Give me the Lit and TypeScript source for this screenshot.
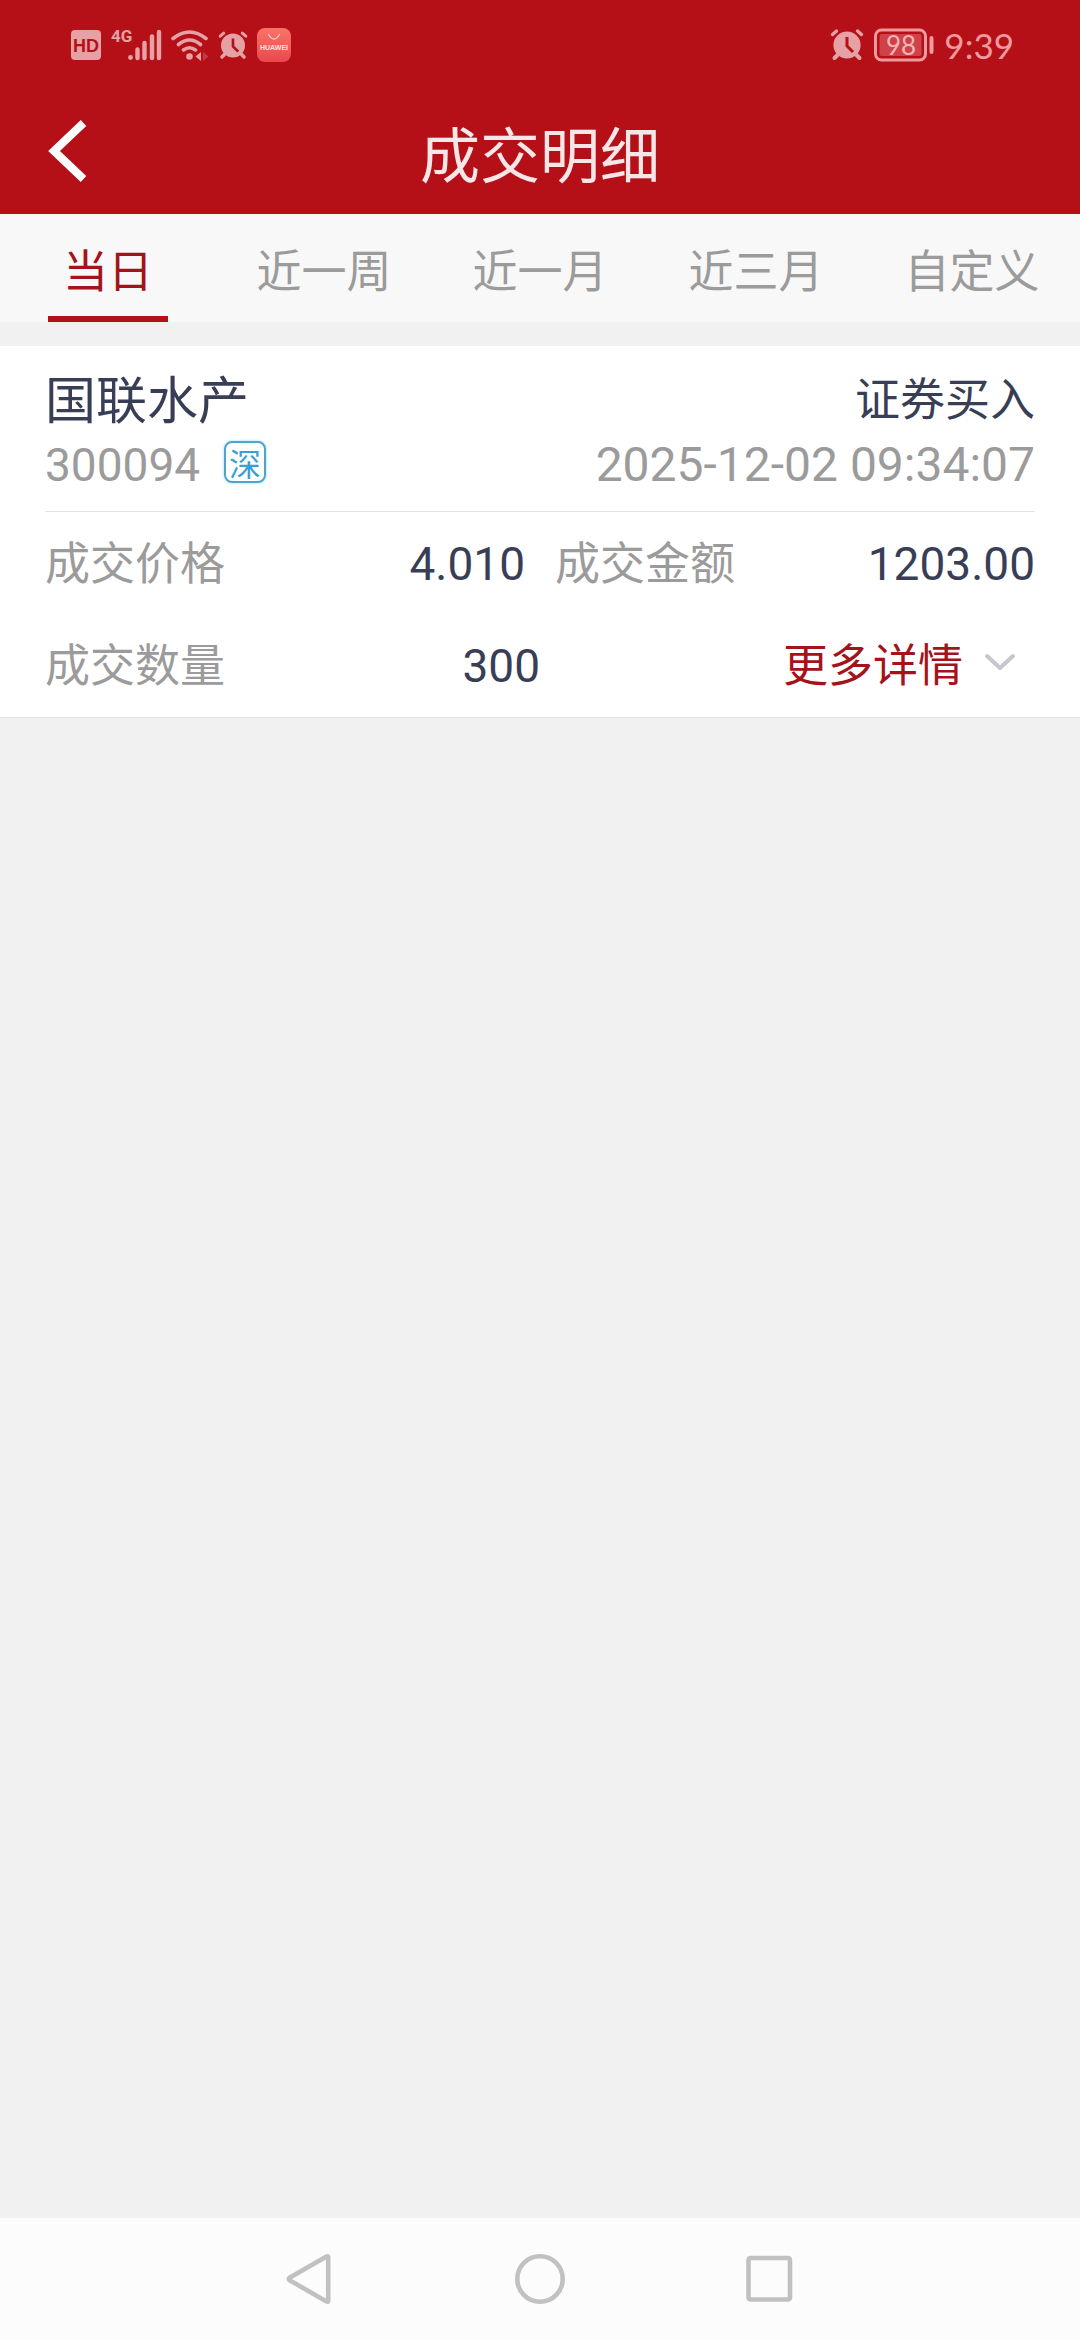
import { LitElement, html, css, svg } from "lit";
import { customElement, property, state } from "lit/decorators.js";

const alarm = svg`
  <circle cx="17" cy="17" r="13.6" fill="currentColor" />
  <path d="M7.5 27 4.5 30M26.5 27l3 3" stroke="currentColor" stroke-width="4" stroke-linecap="round" />
  <path d="M2.5 6.5 6.5 3M31.5 6.5 27.5 3" stroke="currentColor" stroke-width="3.4" stroke-linecap="round" />
  <path d="M17 9v9l6 6" fill="none" stroke="#b51017" stroke-width="3" />
`;

@customElement("status-bar")
export class StatusBar extends LitElement {
  static styles = css`
    :host {
      display: flex;
      justify-content: space-between;
      align-items: center;
      height: 90px;
      box-sizing: border-box;
      padding: 0 66px 0 71px;
      color: #e6a1a5;
    }
    .group {
      display: flex;
      align-items: center;
    }
    .left {
      gap: 9px;
    }
    .right {
      gap: 9px;
    }
    svg {
      display: block;
    }
    .badge {
      font-family: "Liberation Sans", sans-serif;
      font-weight: 700;
    }
    .network {
      font-family: "Liberation Sans Narrow", Roboto, sans-serif;
      font-weight: 700;
    }
    .charge {
      font-family: Lato, sans-serif;
    }
    .time {
      font-family: Lato, sans-serif;
      font-size: 35px;
      line-height: 48px;
      color: #ef9a9e;
    }
  `;

  render() {
    return html`
      <div class="group left">
        <svg width="30" height="30" viewBox="0 0 30 30" role="img" aria-label="HD">
          <rect width="30" height="30" rx="4" fill="currentColor" />
          <text class="badge" x="15" y="21.5" font-size="18" text-anchor="middle" fill="#b51017">HD</text>
        </svg>
        <svg width="52" height="46" viewBox="0 -6 52 46" role="img" aria-label="4G">
          <text class="network" x="1" y="14" font-size="17" fill="currentColor">4G</text>
          <circle cx="20.5" cy="29.500" r="2.400" fill="currentColor" />
          <path
            d="M27.500 21.500v8.500M34.500 15v15M42 8.500V30M49 4V30"
            stroke="currentColor"
            stroke-width="4.400"
            stroke-linecap="round"
          />
        </svg>
        <svg width="38" height="34" viewBox="0 0 38 34" role="img" aria-label="Wi-Fi">
          <path
            d="M2 10.500Q18.500-2.500 35 10.500M7.500 16.500Q18.500 7.500 29.500 16.500M12.500 22Q18.500 17.500 24.500 22"
            fill="none"
            stroke="currentColor"
            stroke-width="3.600"
            stroke-linecap="round"
          />
          <circle cx="18.500" cy="28.500" r="3.300" fill="currentColor" />
          <path d="M30 24v9l-5.500-4.500z" fill="currentColor" />
          <path d="M32 24v9l5.500-4.500z" fill="currentColor" opacity=".3" />
        </svg>
        <svg width="30" height="31" viewBox="0 0 34 34" role="img" aria-label="Alarm">${alarm}</svg>
        <svg width="34" height="34" viewBox="0 0 34 34" role="img" aria-label="HUAWEI">
          <defs>
            <linearGradient id="store" x2="0" y2="1">
              <stop stop-color="#fa7468" />
              <stop offset="1" stop-color="#ea484d" />
            </linearGradient>
          </defs>
          <rect width="34" height="34" rx="8" fill="url(#store)" />
          <path d="M11.500 6.500q5.500 9 11 0" fill="none" stroke="#fdd0cc" stroke-width="1.300" stroke-linecap="round" />
          <text class="badge" x="17" y="22" font-size="7" text-anchor="middle" fill="#ffe4e0">HUAWEI</text>
        </svg>
      </div>
      <div class="group right">
        <svg width="34" height="34" viewBox="0 0 34 34" role="img" aria-label="Alarm">${alarm}</svg>
        <svg width="62" height="34" viewBox="0 0 62 34" role="img" aria-label="98">
          <rect x="2.500" y="2" width="50" height="30" rx="6" fill="none" stroke="#ef9a9e" stroke-width="3" />
          <rect x="6.500" y="6" width="42" height="22" rx="2" fill="#ce4248" />
          <text class="charge" x="28" y="26.5" font-size="26" text-anchor="middle" fill="#f7b4b7">98</text>
          <path d="M58.500 10v14" stroke="#ef9a9e" stroke-width="4" stroke-linecap="round" />
        </svg>
        <span class="time">9:39</span>
      </div>
    `;
  }
}

@customElement("title-bar")
export class TitleBar extends LitElement {
  @property() heading = "";

  static styles = css`
    :host {
      display: grid;
      grid-template-columns: 1fr auto 1fr;
      align-items: center;
      height: 124px;
    }
    .back {
      justify-self: start;
      display: flex;
      margin: 0;
      padding: 12px 45px;
      border: 0;
      background: none;
      cursor: pointer;
    }
    .heading {
      margin: 0;
      font-size: 60px;
      line-height: 80px;
      font-weight: 400;
      color: #f7e6e8;
    }
  `;

  render() {
    return html`
      <button class="back" aria-label="返回">
        <svg width="42" height="64" viewBox="0 0 42 64">
          <path d="M38.500 3 9 31l29.500 28" fill="none" stroke="#fff" stroke-width="8" />
        </svg>
      </button>
      <h1 class="heading">${this.heading}</h1>
    `;
  }
}

@customElement("range-tabs")
export class RangeTabs extends LitElement {
  @property({ attribute: false }) tabs: string[] = [];
  @state() private current = 0;

  static styles = css`
    :host {
      display: block;
      background: #f8f8f8;
    }
    .tabs {
      display: grid;
      grid-template-columns: repeat(5, 1fr);
    }
    .tab {
      display: grid;
      grid-template-rows: 94px 6px;
      justify-items: center;
      align-items: center;
      padding: 8px 0 0;
      border: 0;
      background: none;
      font: inherit;
      font-size: 45px;
      line-height: 60px;
      color: #9b9b9b;
      cursor: pointer;
    }
    .tab::after {
      content: "";
      width: 120px;
      height: 6px;
    }
    .tab[aria-selected="true"] {
      color: #a5131a;
    }
    .tab[aria-selected="true"]::after {
      background: #b51017;
    }
  `;

  render() {
    return html`
      <div class="tabs" role="tablist">
        ${this.tabs.map(
          (label, i) => html`
            <button
              class="tab"
              role="tab"
              aria-selected=${i === this.current ? "true" : "false"}
              @click=${() => (this.current = i)}
            >
              <span>${label}</span>
            </button>
          `,
        )}
      </div>
    `;
  }
}

interface Trade {
  name: string;
  code: string;
  market: string;
  side: string;
  time: string;
  price: string;
  amount: string;
  quantity: string;
}

@customElement("trade-card")
export class TradeCard extends LitElement {
  @property({ attribute: false }) trade!: Trade;

  static styles = css`
    :host {
      display: block;
      padding: 18px 45px 1px;
      background: #fff;
      border-bottom: 1px solid #e2e2e2;
      color: #383e55;
      font-size: 45px;
      line-height: 64px;
    }
    .head {
      padding-bottom: 17px;
      border-bottom: 1px solid #e2e2e2;
    }
    .line {
      display: flex;
      justify-content: space-between;
      align-items: center;
      height: 65px;
    }
    .name {
      margin: 0;
      font-size: 51px;
      font-weight: 400;
    }
    .meta {
      display: flex;
      align-items: center;
      gap: 24px;
      color: #9b9b9b;
    }
    .digits {
      padding-top: 6px;
      font-family: Roboto, sans-serif;
      font-size: 46px;
      line-height: 58px;
    }
    .stamp {
      font-size: 48px;
    }
    .market {
      display: grid;
      place-items: center;
      box-sizing: border-box;
      width: 42px;
      height: 42px;
      border: 2px solid #4fa3cc;
      border-radius: 8px;
      box-shadow: 0 0 3px #8fdcff;
      font-size: 32px;
      line-height: 36px;
      color: #3a9fd4;
    }
    .row {
      display: grid;
      grid-template-columns: 1fr 1fr;
      box-sizing: border-box;
      height: 102px;
      padding-bottom: 4px;
      align-items: center;
      margin: 0;
    }
    .wide {
      column-gap: 30px;
    }
    .field {
      display: flex;
      justify-content: space-between;
      align-items: center;
    }
    .label {
      color: #9b9b9b;
    }
    .more {
      justify-self: end;
      display: flex;
      align-items: center;
      gap: 20px;
      margin: 0;
      padding: 0 18px 0 0;
      border: 0;
      background: none;
      font: inherit;
      color: #a5131a;
      cursor: pointer;
    }
  `;

  private field(label: string, value: string) {
    return html`
      <div class="field">
        <span class="label">${label}</span>
        <span class="digits">${value}</span>
      </div>
    `;
  }

  render() {
    const t = this.trade;
    return html`
      <div class="head">
        <div class="line">
          <h2 class="name">${t.name}</h2>
          <span>${t.side}</span>
        </div>
        <div class="line">
          <div class="meta">
            <span class="digits">${t.code}</span>
            <span class="market">${t.market}</span>
          </div>
          <time class="meta digits stamp">${t.time}</time>
        </div>
      </div>
      <div class="row wide">${this.field("成交价格", t.price)}${this.field("成交金额", t.amount)}</div>
      <div class="row">
        ${this.field("成交数量", t.quantity)}
        <button class="more">
          更多详情
          <svg width="34" height="20" viewBox="0 0 34 20">
            <path d="M4 3l13 12L30 3" fill="none" stroke="#c6c7cd" stroke-width="4" stroke-linecap="round" stroke-linejoin="round" />
          </svg>
        </button>
      </div>
    `;
  }
}

@customElement("system-nav")
export class SystemNav extends LitElement {
  static styles = css`
    :host {
      display: flex;
      justify-content: center;
      align-items: center;
      gap: 178px;
      height: 122px;
      background: #fcfcfc;
    }
    .key {
      display: flex;
      padding: 0;
      border: 0;
      background: none;
      cursor: pointer;
    }
  `;

  private key(label: string, shape: unknown) {
    return html`
      <button class="key" aria-label=${label}>
        <svg width="52" height="52" viewBox="0 0 52 52" fill="none" stroke="#c1c1c1" stroke-width="4.600" stroke-linejoin="round">
          ${shape}
        </svg>
      </button>
    `;
  }

  render() {
    return html`
      ${this.key("返回", svg`<path d="M42.500 3.600Q44.200 2.500 44.200 4.500V47.500Q44.200 49.500 42.500 48.400L6 27.500Q3.500 26 6 24.500Z" />`)}
      ${this.key("主页", svg`<circle cx="26" cy="26" r="22.700" />`)}
      ${this.key("最近任务", svg`<rect x="4.500" y="5" width="41.500" height="41.500" rx="2" />`)}
    `;
  }
}

@customElement("app-root")
export class AppRoot extends LitElement {
  private tabs = ["当日", "近一周", "近一月", "近三月", "自定义"];
  private trades: Trade[] = [
    {
      name: "国联水产",
      code: "300094",
      market: "深",
      side: "证券买入",
      time: "2025-12-02 09:34:07",
      price: "4.010",
      amount: "1203.00",
      quantity: "300",
    },
  ];

  static styles = css`
    :host {
      display: flex;
      flex-direction: column;
      min-height: 100vh;
      background: #f1f1f1;
      font-family: "Noto Sans CJK SC", sans-serif;
    }
    .top {
      background: #b51017;
    }
    .list {
      flex: 1;
      padding-top: 24px;
    }
  `;

  render() {
    return html`
      <header class="top">
        <status-bar></status-bar>
        <title-bar heading="成交明细"></title-bar>
      </header>
      <range-tabs .tabs=${this.tabs}></range-tabs>
      <main class="list">${this.trades.map((t) => html`<trade-card .trade=${t}></trade-card>`)}</main>
      <system-nav></system-nav>
    `;
  }
}
